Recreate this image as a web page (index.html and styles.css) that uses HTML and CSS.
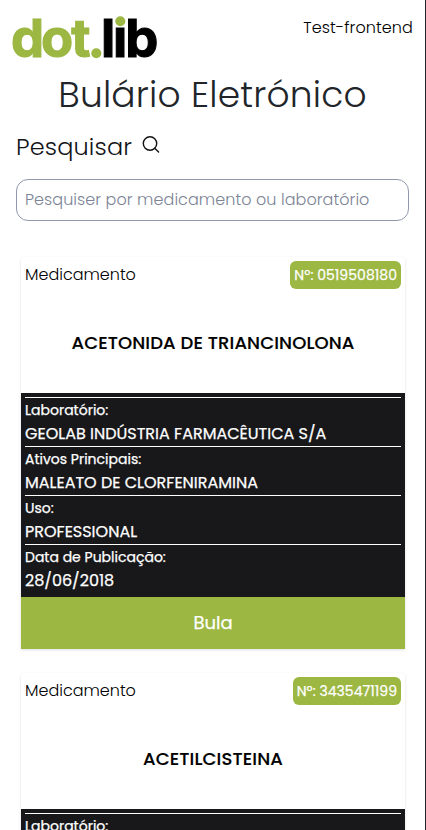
FILE: index.html
```html
<!DOCTYPE html>
<html lang="pt">
<head>
<meta charset="utf-8">
<meta name="viewport" content="width=device-width, initial-scale=1">
<title>Bulário Eletrónico</title>
<link rel="stylesheet" href="styles.css">
</head>
<body>
<div class="page">
  <header class="header">
    <svg class="logo" width="150" height="50" viewBox="0 0 150 50" aria-label="dot.lib">
      <text class="logo-green" x="-0.9 29.1 59.3" y="45.3">dot</text>
      <circle class="logo-dot" cx="84.3" cy="41.3" r="5"/>
      <text class="logo-black" x="88.9 100.9 113.3" y="45.3">lıb</text>
      <circle class="logo-dot" cx="108.3" cy="9.2" r="5"/>
    </svg>
    <a class="header-link">Test-frontend</a>
  </header>
  <h1 class="title">Bulário Eletrónico</h1>
  <section class="search">
    <label class="search-label">Pesquisar
      <svg class="search-icon" width="18" height="18" viewBox="0 0 18 18"><circle cx="8" cy="7.5" r="6.7"/><path d="M12.7 12.2 16.6 16"/></svg>
    </label>
    <div class="search-box">Pesquiser por medicamento ou laboratório</div>
  </section>
  <main class="cards">
    <article class="card">
      <div class="card-top">
        <div class="card-head"><span>Medicamento</span><span class="badge">Nº: 0519508180</span></div>
        <h2 class="card-name">ACETONIDA DE TRIANCINOLONA</h2>
      </div>
      <div class="details">
        <div class="row"><span class="key">Laboratório:</span><span class="value">GEOLAB INDÚSTRIA FARMACÊUTICA S/A</span></div>
        <div class="row"><span class="key">Ativos Principais:</span><span class="value">MALEATO DE CLORFENIRAMINA</span></div>
        <div class="row"><span class="key">Uso:</span><span class="value">PROFESSIONAL</span></div>
        <div class="row"><span class="key">Data de Publicação:</span><span class="value">28/06/2018</span></div>
      </div>
      <div class="button">Bula</div>
    </article>
    <article class="card">
      <div class="card-top">
        <div class="card-head"><span>Medicamento</span><span class="badge">Nº: 3435471199</span></div>
        <h2 class="card-name">ACETILCISTEINA</h2>
      </div>
      <div class="details">
        <div class="row"><span class="key">Laboratório:</span></div>
      </div>
    </article>
  </main>
</div>
</body>
</html>
```
FILE: styles.css
```css
* { box-sizing: border-box; }
body { margin: 0; background: #fff; color: #000; font-family: Poppins, Inter, "Open Sans", sans-serif; }
.page { height: 830px; overflow: hidden; border-right: 1px solid #20272e; }
.header { height: 76px; padding: 12px 12px 0; display: flex; justify-content: space-between; }
.logo { display: block; overflow: visible; }
.logo text { font-family: Inter, sans-serif; font-size: 52.5px; font-weight: 700; stroke-width: 1.1px; }
.logo-green, .logo-dot { fill: #9cb742; }
.logo-green { stroke: #9cb742; }
.logo-black { fill: #000; stroke: #000; }
.header-link { font-size: 16px; letter-spacing: 0.1px; line-height: 24px; padding-top: 4px; font-weight: 300; }
.title { margin: 0; height: 38px; line-height: 38px; text-align: center; font-size: 36px; letter-spacing: 0.2px; font-weight: 300; color: #212529; white-space: nowrap; }
.search { padding: 18px 16px 0; }
.search-label { display: flex; align-items: center; height: 28px; font-size: 24px; letter-spacing: 0.15px; font-weight: 300; color: #111318; }
.search-icon { margin: -2px 0 0 10px; fill: none; stroke: #111; stroke-width: 1.4; stroke-linecap: round; }
.search-box { margin-top: 19px; height: 42px; border: 1px solid #9198ab; border-radius: 12px; padding: 0 8px; font-size: 16px; letter-spacing: 0.06px; line-height: 40px; font-weight: 300; color: #7c8495; white-space: nowrap; }
.cards { padding: 36px 20px 0 21px; display: flex; flex-direction: column; gap: 24px; }
.card { border-radius: 4px 4px 0 0; box-shadow: 0 1px 3px rgba(0, 0, 0, .12); }
.card-top { height: 136px; padding: 4px; }
.card-head { display: flex; justify-content: space-between; height: 28px; line-height: 27px; font-size: 16px; font-weight: 300; }
.badge { height: 28px; line-height: 28px; padding: 0 4px; border-radius: 6px; background: #9cb742; color: #fff; font-size: 14px; letter-spacing: 0.04px; font-weight: 400; white-space: nowrap; -webkit-text-stroke: 0.25px #fff; }
.card-name { margin: 40px 0 0; text-align: center; font-size: 18px; letter-spacing: 0.12px; line-height: 28px; font-weight: 500; white-space: nowrap; -webkit-text-stroke: 0.15px #000; }
.details { background: #18181b; padding: 4px; color: #fff; }
.row { height: 49px; border-top: 1px solid #fff; display: flex; flex-direction: column; align-items: flex-start; white-space: nowrap; -webkit-text-stroke: 0.25px #fff; }
.key { height: 24px; line-height: 24px; font-size: 14px; font-weight: 400; }
.value { height: 24px; line-height: 23px; font-size: 16px; font-weight: 400; }
.button { height: 52px; line-height: 52px; background: #9cb742; color: #fff; text-align: center; font-size: 18px; font-weight: 400; -webkit-text-stroke: 0.25px #fff; }
```
